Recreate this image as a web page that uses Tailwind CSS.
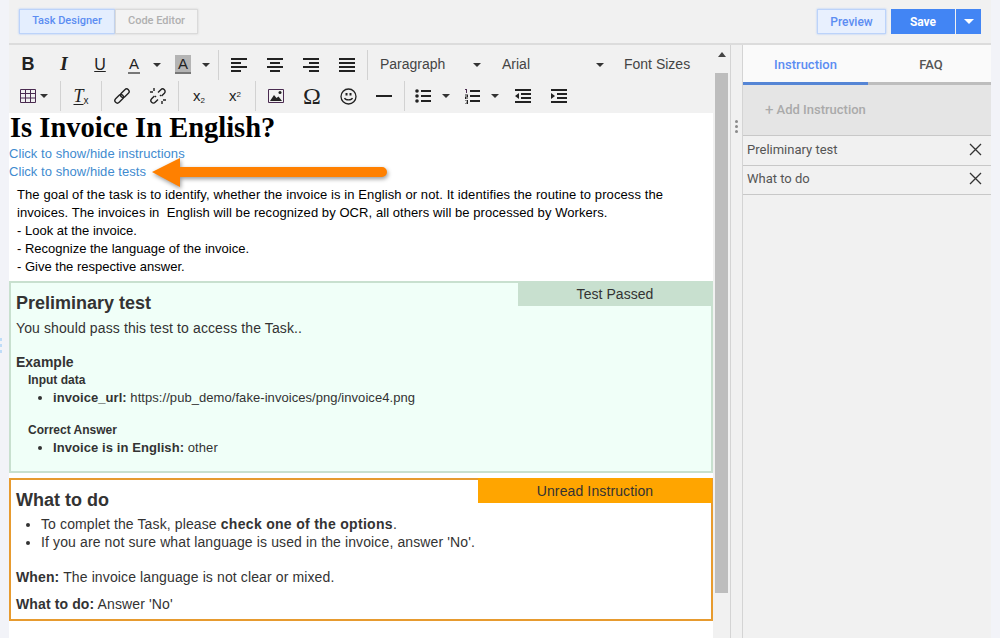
<!DOCTYPE html>
<html lang="en">
<head>
    <meta charset="UTF-8">
    <meta name="viewport" content="width=device-width, initial-scale=1.0">
    <title>Task Designer</title>
    <script src="https://cdn.jsdelivr.net/npm/@tailwindcss/browser@4"></script>
</head>
<body class="bg-[#f2f3f8] font-['Liberation_Sans',sans-serif]">
<!-- resize handle peeking in at the window edge -->
<div class="absolute top-[338px] left-0 flex flex-col gap-[3px]">
    <span class="h-[3px] w-[2px] bg-[#bfdcf8]"></span>
    <span class="h-[3px] w-[2px] bg-[#bfdcf8]"></span>
    <span class="h-[3px] w-[2px] bg-[#bfdcf8]"></span>
</div>
<div class="relative mx-[9px] h-[638px] w-[982px] overflow-hidden bg-[#f1f1f1]">

    <!-- Top bar -->
    <header class="flex h-[45px] items-start justify-between border-b-2 border-[#dcdcdc] pt-[9px] pl-[10px] pr-[10px] font-['Roboto',sans-serif] text-[11px] font-medium">
        <div class="flex h-[25px]">
            <button class="w-[96px] border border-[#bcd3fa] bg-[#e4eefe] text-[#5c8df2] shadow-[0_0_2px_#a9c6fa]">Task Designer</button>
            <button class="w-[83px] border border-[#dadada] bg-[#f3f3f3] text-[#b0b0b0] shadow-[0_0_2px_#cfcfcf]">Code Editor</button>
        </div>
        <div class="flex h-[25px]">
            <button class="mr-[5px] w-[69px] border border-[#bcd3fa] bg-[#e8f0fe] text-[12px] text-[#5c8df2] shadow-[0_0_2px_#a9c6fa]">Preview</button>
            <button class="w-[64px] bg-[#4285f4] text-[12px] font-bold text-white">Save</button>
            <button class="ml-px flex w-[25px] items-center justify-center bg-[#4285f4]">
                <span class="border-x-[5px] border-t-[5px] border-x-transparent border-t-white"></span>
            </button>
        </div>
    </header>

    <div class="flex h-[593px]">
        <!-- Editor column -->
        <main class="w-[704px] shrink-0 bg-white">
            <!-- Toolbar -->
            <div class="h-[68px] bg-[#f1f1f1] text-[#222]">
                <div class="flex h-[36px] items-center pl-px pt-[3px]">
                    <span class="flex w-9 justify-center font-['Liberation_Sans',sans-serif] text-[18px] font-bold">B</span>
                    <span class="flex w-9 justify-center font-['Liberation_Serif',serif] text-[19px] font-bold italic">I</span>
                    <span class="flex w-9 justify-center text-[16px] leading-[17px] underline underline-offset-1">U</span>
                    <span class="flex w-8 justify-center border-b-0 text-[15px]"><span class="border-b-2 border-[#777] px-px leading-[17px]">A</span></span>
                    <span class="flex w-[14px] justify-center"><span class="border-x-4 border-t-4 border-x-transparent border-t-[#333]"></span></span>
                    <span class="ml-[2px] flex w-[34px] justify-center text-[15px]"><span class="border-b-2 border-[#777] bg-[#b4b4b4] px-[3px] leading-[17px]">A</span></span>
                    <span class="flex w-3 justify-center"><span class="border-x-4 border-t-4 border-x-transparent border-t-[#333]"></span></span>
                    <span class="ml-[6px] mr-[2px] h-[30px] w-px bg-[#d2d2d2]"></span>
                    <span class="flex w-9 justify-center"><svg width="16" height="14" viewBox="0 0 16 14" fill="#222"><path d="M0 0h16v2H0zM0 4h10v2H0zM0 8h16v2H0zM0 12h10v2H0z"/></svg></span>
                    <span class="flex w-9 justify-center"><svg width="16" height="14" viewBox="0 0 16 14" fill="#222"><path d="M0 0h16v2H0zM3 4h10v2H3zM0 8h16v2H0zM3 12h10v2H3z"/></svg></span>
                    <span class="flex w-9 justify-center"><svg width="16" height="14" viewBox="0 0 16 14" fill="#222"><path d="M0 0h16v2H0zM6 4h10v2H6zM0 8h16v2H0zM6 12h10v2H6z"/></svg></span>
                    <span class="flex w-9 justify-center"><svg width="16" height="14" viewBox="0 0 16 14" fill="#222"><path d="M0 0h16v2H0zM0 4h16v2H0zM0 8h16v2H0zM0 12h16v2H0z"/></svg></span>
                    <span class="ml-[2px] h-[30px] w-px bg-[#d2d2d2]"></span>
                    <span class="flex w-[122px] items-center justify-between pl-[12px] pr-[9px] text-[14px] text-[#444]">Paragraph<span class="border-x-4 border-t-4 border-x-transparent border-t-[#333]"></span></span>
                    <span class="flex w-[122px] items-center justify-between pl-[12px] pr-[8px] text-[14px] text-[#444]">Arial<span class="border-x-4 border-t-4 border-x-transparent border-t-[#333]"></span></span>
                    <span class="pl-[12px] text-[14px] text-[#444]">Font Sizes</span>
                </div>
                <div class="flex h-[32px] items-center pb-[2px]">
                    <span class="ml-[11px] flex"><svg width="16" height="14" viewBox="0 0 16 14" fill="none" stroke="#4a2b50"><path d="M.5.5h15v13H.5zM.5 4.5h15M.5 9h15M5.5.5v13M10.5.5v13"/></svg></span>
                    <span class="flex w-[16px] justify-center"><span class="border-x-4 border-t-4 border-x-transparent border-t-[#333]"></span></span>
                    <span class="ml-[8px] h-[30px] w-px bg-[#d2d2d2]"></span>
                    <span class="flex w-10 justify-center font-['Liberation_Serif',serif] text-[18px] italic"><span><span class="underline underline-offset-2">T</span><sub class="font-['Liberation_Sans',sans-serif] text-[10px] not-italic">x</sub></span></span>
                    <span class="h-[30px] w-px bg-[#d2d2d2]"></span>
                    <span class="flex w-[76px] justify-center">
                        <span class="flex w-9 justify-center"><svg width="16" height="16" viewBox="0 0 16 16" fill="none" stroke="#222" stroke-width="1.4"><g transform="rotate(-45 8 8)"><rect x="-1" y="5.5" width="10" height="5" rx="2.5"/><rect x="7" y="5.5" width="10" height="5" rx="2.5"/></g></svg></span>
                        <span class="flex w-9 justify-center"><svg width="16" height="16" viewBox="0 0 16 16" fill="none" stroke="#222" stroke-width="1.4"><g transform="rotate(-45 8 8)"><path d="M5.500 5.500H1.500a2.500 2.500 0 0 0 0 5h4M10.500 5.500h4a2.500 2.500 0 0 1 0 5h-4"/></g><path d="M4 0v3M0 4h3M12 13v3M13 12h3M6 8l-1 1M11 7l-1 1"/></svg></span>
                    </span>
                    <span class="h-[30px] w-px bg-[#d2d2d2]"></span>
                    <span class="flex w-[76px] items-center justify-center text-[15px]">
                        <span class="flex w-9 justify-center"><span>x<sub class="text-[8px]">2</sub></span></span>
                        <span class="flex w-9 justify-center"><span>x<sup class="text-[8px]">2</sup></span></span>
                    </span>
                    <span class="h-[30px] w-px bg-[#d2d2d2]"></span>
                    <span class="flex w-[148px] items-center justify-center">
                        <span class="flex w-9 justify-center"><svg width="16" height="14" viewBox="0 0 16 14"><path fill="none" stroke="#4a2b50" d="M.5.500h15v13H.5z"/><path fill="#222" d="M2 12l4-6 2.500 3 2-1.500L14 12z"/><circle cx="12" cy="3.500" r="1.500" fill="#222"/></svg></span>
                        <span class="flex w-9 justify-center font-['Liberation_Serif',serif] text-[24px] leading-none">Ω</span>
                        <span class="flex w-9 justify-center"><svg width="17" height="17" viewBox="0 0 17 17" fill="none" stroke="#222" stroke-width="1.300"><circle cx="8.500" cy="8.500" r="7.500"/><path d="M4.500 10c1 2.500 7 2.500 8 0"/><path fill="#222" stroke="none" d="M5.500 5h2v2.500h-2zM9.500 5h2v2.500h-2z"/></svg></span>
                        <span class="flex w-9 justify-center"><span class="h-[2px] w-4 bg-[#222]"></span></span>
                    </span>
                    <span class="h-[30px] w-px bg-[#d2d2d2]"></span>
                    <span class="flex w-9 justify-center"><svg width="16" height="14" viewBox="0 0 16 14" fill="#222"><circle cx="2" cy="2" r="1.800"/><circle cx="2" cy="7" r="1.800"/><circle cx="2" cy="12" r="1.800"/><path d="M6 1h10v2H6zM6 6h10v2H6zM6 11h10v2H6z"/></svg></span>
                    <span class="flex w-[10px] justify-center"><span class="border-x-4 border-t-4 border-x-transparent border-t-[#333]"></span></span>
                    <span class="ml-[3px] flex w-9 justify-center"><svg width="16" height="15" viewBox="0 0 16 15" fill="#222"><path fill="#4a2b50" d="M1 0h2v4H2V1H1z"/><path d="M1 5.500h3v3H2v1h2v.500H1V7.500h2v-1H1zM1 11h3v4H1v-.600h2v-1H2v-.600h1v-1.200H1zM6 1h10v2H6zM6 6h10v2H6zM6 11h10v2H6z"/></svg></span>
                    <span class="flex w-[10px] justify-center"><span class="border-x-4 border-t-4 border-x-transparent border-t-[#333]"></span></span>
                    <span class="ml-[5px] flex w-9 justify-center"><svg width="16" height="14" viewBox="0 0 16 14" fill="#222"><path d="M0 0h16v2H0zM6 4h10v2H6zM6 8h10v2H6zM0 12h16v2H0zM4 4v6L0 7z"/></svg></span>
                    <span class="flex w-9 justify-center"><svg width="16" height="14" viewBox="0 0 16 14" fill="#222"><path d="M0 0h16v2H0zM6 4h10v2H6zM6 8h10v2H6zM0 12h16v2H0zM0 4v6l4-3z"/></svg></span>
                </div>
            </div>

            <!-- Document -->
            <div class="text-[13px] text-black">
                <h1 class="pl-px pt-px font-['Liberation_Serif',serif] text-[28.5px] leading-[28px] font-bold">Is Invoice In English?</h1>
                <div class="mt-[3px] leading-[18px] tracking-[0.05px] text-[#3f8bcf]">
                    <p class="mt-[3px]">Click to show/hide instructions</p>
                    <p>Click to show/hide tests</p>
                </div>
                <div class="mt-[5px] pl-[8px] leading-[18px]">
                    <p class="tracking-[0.1px]">The goal of the task is to identify, whether the invoice is in English or not. It identifies the routine to process the</p>
                    <p class="whitespace-pre tracking-[0.07px]">invoices. The invoices in  English will be recognized by OCR, all others will be processed by Workers.</p>
                    <p>- Look at the invoice.</p>
                    <p>- Recognize the language of the invoice.</p>
                    <p>- Give the respective answer.</p>
                </div>

                <!-- Preliminary test card -->
                <section class="relative mt-[5px] h-[192px] border-2 border-[#c8e0cf] bg-[#f0fff8] pl-[5px] text-[#333]">
                    <span class="absolute -top-[2px] -right-[1px] flex h-[25px] w-[194px] items-center justify-center bg-[#c8e0cf] pt-px text-[14px] tracking-[0.05px]">Test Passed</span>
                    <h2 class="pt-[8px] text-[18px] leading-[24px] font-bold">Preliminary test</h2>
                    <p class="mt-[3px] text-[14px] leading-[20px] tracking-[0.11px]">You should pass this test to access the Task..</p>
                    <h3 class="mt-[14px] text-[14px] leading-[20px] font-bold">Example</h3>
                    <div class="pl-[12px] text-[13px] leading-[18px]">
                        <h4 class="-mt-px text-[12px] font-bold">Input data</h4>
                        <ul class="list-disc pl-[25px] tracking-[0.06px]">
                            <li><b>invoice_url:</b> https://pub_demo/fake-invoices/png/invoice4.png</li>
                        </ul>
                        <h4 class="mt-[14px] text-[12px] font-bold">Correct Answer</h4>
                        <ul class="list-disc pl-[25px] tracking-[0.08px]">
                            <li><b>Invoice is in English:</b> other</li>
                        </ul>
                    </div>
                </section>

                <!-- Unread instruction card -->
                <section class="relative mt-[5px] h-[143px] border-2 border-[#e79b2f] bg-white pl-[5px] text-[14px] tracking-[0.12px] text-[#333]">
                    <span class="absolute -top-[2px] -right-[1px] flex h-[25px] w-[234px] items-center justify-center bg-[#ffa500] pt-px">Unread Instruction</span>
                    <h2 class="pt-[8px] text-[18px] leading-[24px] font-bold tracking-normal">What to do</h2>
                    <ul class="mt-[3px] list-disc pl-[25px] leading-[18px]">
                        <li>To complet the Task, please <b class="tracking-[0.3px]">check one of the options</b>.</li>
                        <li>If you are not sure what language is used in the invoice, answer 'No'.</li>
                    </ul>
                    <p class="mt-[17px] leading-[18px]"><b>When:</b> The invoice language is not clear or mixed.</p>
                    <p class="mt-[9px] leading-[18px]"><b>What to do:</b> Answer 'No'</p>
                </section>
            </div>
        </main>

        <!-- Editor scrollbar -->
        <div class="ml-[2px] w-[13px] shrink-0">
            <div class="flex h-[28px] justify-center pt-[7px]"><span class="h-0 border-x-4 border-b-[5px] border-x-transparent border-b-[#444]"></span></div>
            <div class="h-[520px] bg-[#bdbdbd]"></div>
        </div>

        <!-- Splitter -->
        <div class="ml-[2px] flex w-[13px] shrink-0 flex-col items-center gap-[2px] border-x border-[#d4d4d4] pt-[75px]">
            <span class="size-[3px] rounded-full bg-[#8a8a8a]"></span>
            <span class="size-[3px] rounded-full bg-[#8a8a8a]"></span>
            <span class="size-[3px] rounded-full bg-[#8a8a8a]"></span>
        </div>

        <!-- Side panel -->
        <aside class="min-w-0 flex-1 font-['Roboto',sans-serif] text-[13px] text-[#555]">
            <div class="flex h-[40px] bg-[#fafafa] font-medium">
                <div class="flex w-[125px] items-center justify-center border-b-[3px] border-[#5585d5] pt-[3px] text-[#5c8df2]">Instruction</div>
                <div class="flex flex-1 items-center justify-center border-b-[3px] border-[#bdbdbd] pl-[3px] pt-[3px]">FAQ</div>
            </div>
            <div class="flex h-[50px] items-center bg-[#e5e5e5] pl-[22px] font-medium text-[#aaa]"><span class="mr-[3px] text-[15px] font-normal">+</span>Add Instruction</div>
            <div class="flex h-[31px] items-center justify-between border-y border-[#c8c8c8] pb-px pl-[4px] pr-[9px]">Preliminary test
                <svg class="mb-px" width="13" height="13" viewBox="0 0 13 13" stroke="#333" stroke-width="1.300"><path d="M1 1l11 11M12 1L1 12"/></svg>
            </div>
            <div class="flex h-[29px] items-center justify-between border-b border-[#c8c8c8] pb-[2px] pl-[4px] pr-[9px]">What to do
                <svg class="mb-px" width="13" height="13" viewBox="0 0 13 13" stroke="#333" stroke-width="1.300"><path d="M1 1l11 11M12 1L1 12"/></svg>
            </div>
        </aside>
    </div>

    <!-- Callout arrow over the link -->
    <svg class="absolute top-[155px] left-[141px] drop-shadow-[1px_2px_2px_rgba(0,0,0,0.4)]" width="240" height="36" viewBox="0 0 240 36">
        <path fill="#ff8000" d="M2 17L30 3v9h202a5 5 0 0 1 0 10H30v10z"/>
    </svg>
</div>
</body>
</html>
